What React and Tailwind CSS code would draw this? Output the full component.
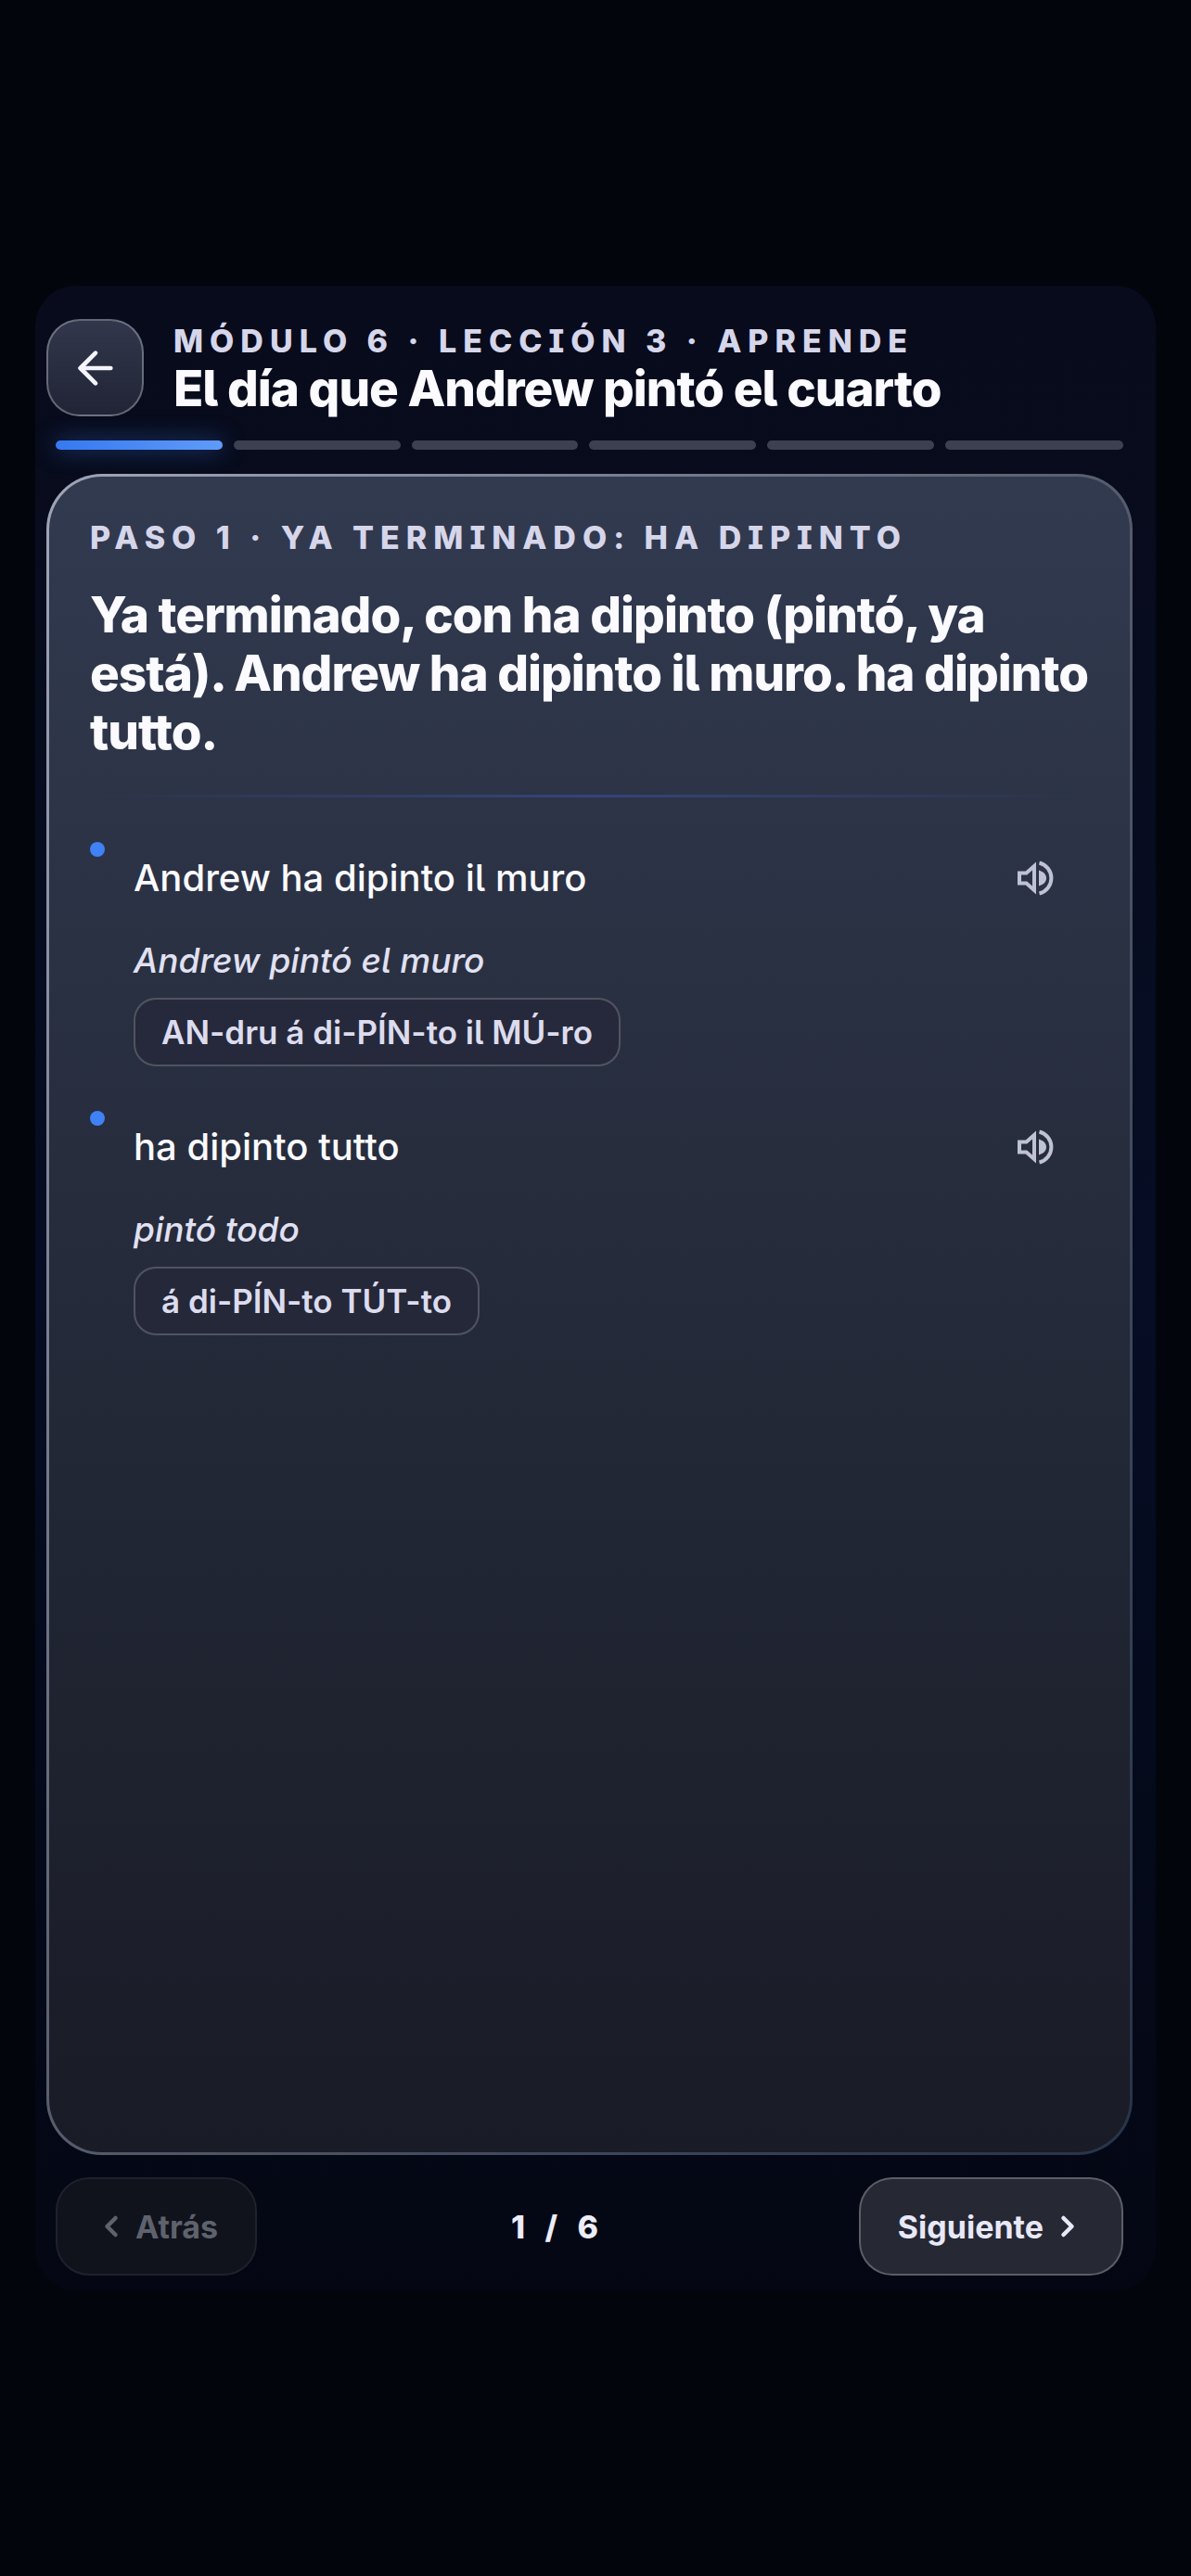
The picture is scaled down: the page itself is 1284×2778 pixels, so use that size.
import { ArrowLeft, ChevronLeft, ChevronRight } from "lucide-react";

const TOTAL_STEPS = 6;
const CURRENT_STEP = 1;

const PHRASES = [
  { it: "Andrew ha dipinto il muro", es: "Andrew pintó el muro", say: "AN-dru á di-PÍN-to il MÚ-ro" },
  { it: "ha dipinto tutto", es: "pintó todo", say: "á di-PÍN-to TÚT-to" },
];

const SpeakerIcon = () => (
  <svg viewBox="0 0 42 42" className="size-[42px]" fill="none" stroke="currentColor" strokeWidth="4">
    <path d="M3 15.5h7.500L19 8v26l-8.500-7.500H3z" />
    <path d="M24 12.500c5 1.500 8 4.500 8 8.500s-3 7-8 8.500z" fill="currentColor" stroke="none" />
    <path d="M24.500 4.500a17 17 0 0 1 0 33" />
  </svg>
);

const Eyebrow = ({ children }) => (
  <p className="text-[34px] leading-[44px] font-extrabold tracking-[7px] uppercase text-[#d6d6ea] [font-feature-settings:'cv08']">
    {children}
  </p>
);

const Phrase = ({ phrase }) => (
  <li className="flex gap-[31px] pb-12">
    <span className="size-4 shrink-0 rounded-full bg-[#3f82f6]" />
    <div className="min-w-0 flex-1">
      <div className="flex items-center justify-between pt-3 pr-9">
        <p className="text-[40px] leading-[54px] font-medium text-[#fafaff]">{phrase.it}</p>
        <button type="button" aria-label={`Escuchar: ${phrase.it}`} className="text-[#bfc2d4]">
          <SpeakerIcon />
        </button>
      </div>
      <p className="mt-[38px] text-[37px] leading-[48px] font-medium italic text-[#e1e1f2]">{phrase.es}</p>
      <p className="mt-4 inline-block rounded-3xl border-2 border-white/20 bg-[#262839]/80 px-7 py-3 text-[35px] leading-[46px] font-semibold text-[#dcdcee]">
        {phrase.say}
      </p>
    </div>
  </li>
);

export default function App() {
  return (
    <div className="flex min-h-screen items-center bg-[#02050c] px-[38px] font-['Inter',sans-serif] [font-feature-settings:'cv05']">
      <main className="flex min-h-[2162px] w-full flex-col rounded-[44px] bg-linear-to-b from-[#080b1b] via-[#060d24] to-[#040713] pt-9 pr-[25px] pb-4 pl-3">
        <header className="flex items-center gap-8">
          <button
            type="button"
            aria-label="Volver"
            className="flex size-[105px] shrink-0 items-center justify-center rounded-[36px] border-2 border-white/30 bg-linear-to-b from-[#32374b] to-[#212436] text-[#f4f4ff]"
          >
            <ArrowLeft size={56} strokeWidth={2} />
          </button>
          <div className="min-w-0">
            <Eyebrow>Módulo 6 · Lección 3 · Aprende</Eyebrow>
            <h1 className="text-[53px] leading-[58px] font-extrabold tracking-[-1px] text-[#fafaff]">El día que Andrew pintó el cuarto</h1>
          </div>
        </header>

        <div className="mx-[10px] mt-[26px] grid grid-cols-6">
          {Array.from({ length: TOTAL_STEPS }, (_, i) => (
            <div key={i} className="pr-3 last:pr-0">
              <div
                className={`h-[10px] rounded-full ${i < CURRENT_STEP ? "bg-linear-to-r from-[#3578f0] to-[#609bfa] shadow-[0_0_24px_rgba(59,130,246,0.5)]" : "bg-[#3d4051]"}`}
              />
            </div>
          ))}
        </div>

        <section className="mt-[26px] flex flex-1 rounded-[60px] bg-linear-to-br from-[#a0a6b8] via-[#565c6c] to-[#263349] p-[3px]">
          <div className="flex-1 rounded-[57px] bg-linear-to-b from-[#323a50] via-[#242a39] to-[#191b26] px-11 pt-11">
            <Eyebrow>Paso 1 · Ya terminado: ha dipinto</Eyebrow>
            <h2 className="mt-[30px] text-[53px] leading-[63px] font-extrabold tracking-[-1px] text-[#fafaff]">
              Ya terminado, con ha dipinto (pintó, ya está). Andrew ha dipinto il muro. ha dipinto tutto.
            </h2>
            <hr className="mt-9 h-[3px] border-0 bg-linear-to-r from-transparent via-[#33457a] to-transparent" />
            <ul className="mt-12">
              {PHRASES.map((phrase) => (
                <Phrase key={phrase.it} phrase={phrase} />
              ))}
            </ul>
          </div>
        </section>

        <footer className="mx-[10px] mt-6 flex items-center justify-between">
          <button
            type="button"
            disabled
            className="flex h-[106px] items-center gap-2 rounded-[36px] border-2 border-[#1f222b] bg-[#10131c] px-10 text-[34px] font-bold text-[#5f626c]"
          >
            <ChevronLeft size={36} strokeWidth={3} />
            Atrás
          </button>
          <span className="text-[34px] font-extrabold tracking-[7px] text-[#ededfa]">
            {CURRENT_STEP} / {TOTAL_STEPS}
          </span>
          <button
            type="button"
            className="flex h-[106px] items-center gap-2 rounded-[36px] border-2 border-white/25 bg-[#262834] px-10 text-[34px] font-bold text-[#e8e8f8]"
          >
            Siguiente
            <ChevronRight size={36} strokeWidth={3} />
          </button>
        </footer>
      </main>
    </div>
  );
}
